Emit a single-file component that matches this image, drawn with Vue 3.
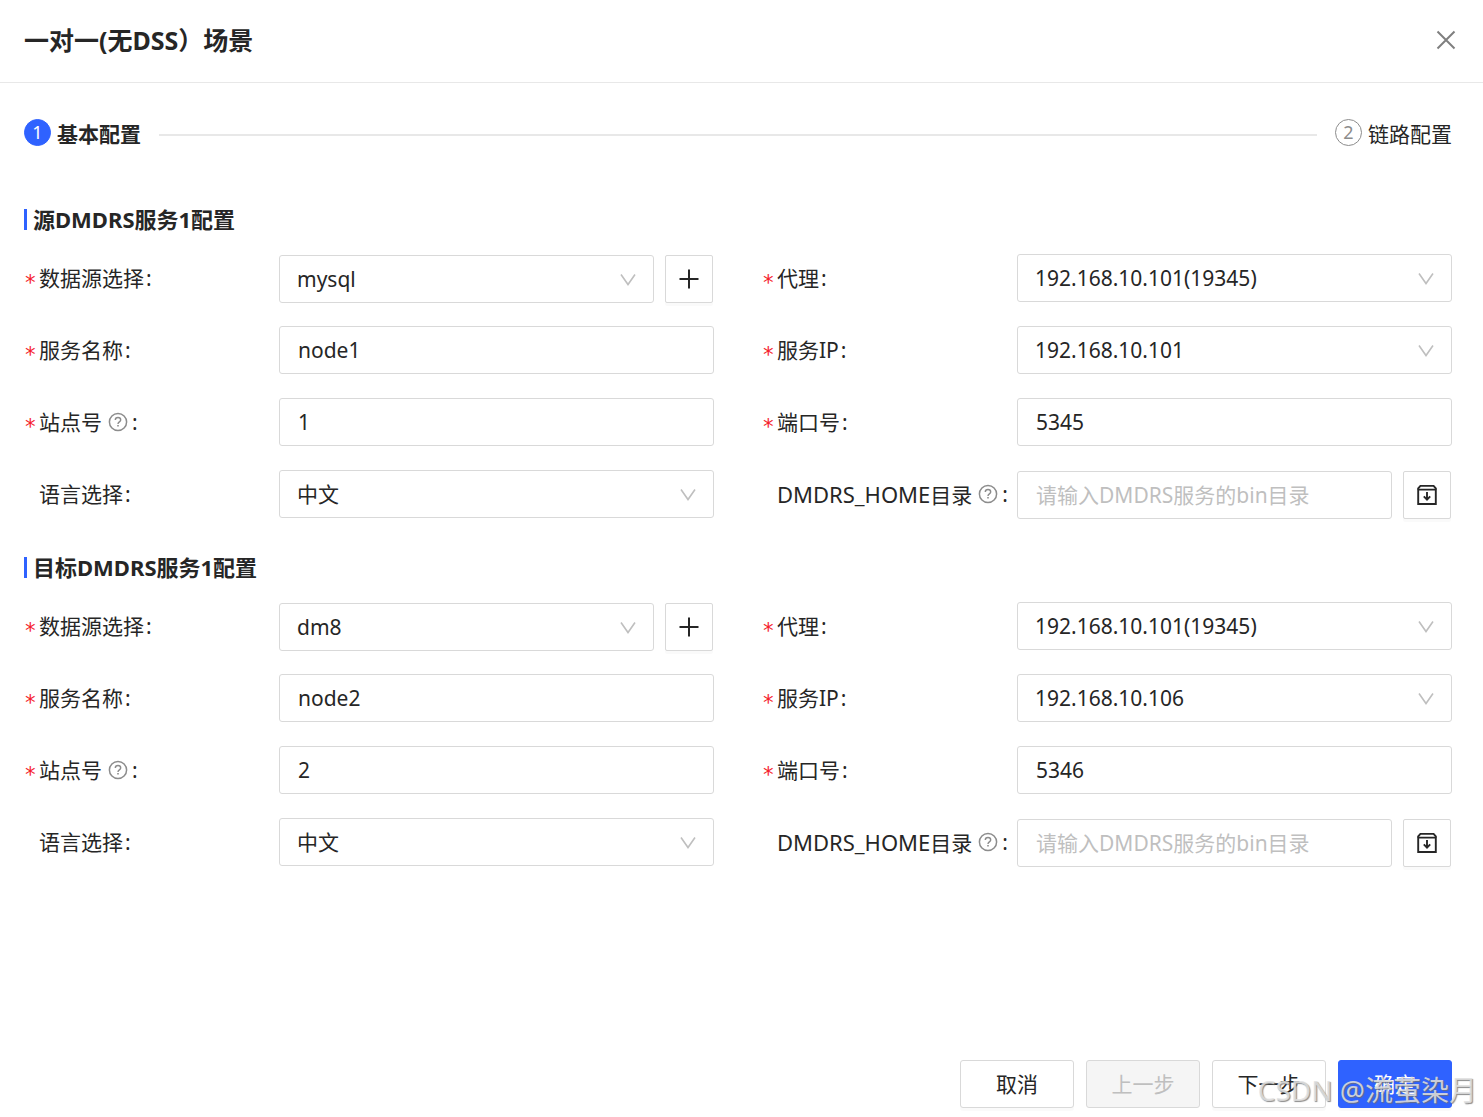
<script setup>
import { reactive } from 'vue'

const hosts = ['192.168.10.101', '192.168.10.106']

const sections = reactive([
  {
    id: 'source',
    title: '源DMDRS服务1配置',
    fields: [
      { key: 'ds', label: '数据源选择', required: true, type: 'select', value: 'mysql', options: ['mysql', 'dm8'], addon: 'plus' },
      { key: 'agent', label: '代理', required: true, type: 'select', value: '192.168.10.101(19345)', options: ['192.168.10.101(19345)'] },
      { key: 'name', label: '服务名称', required: true, type: 'input', value: 'node1' },
      { key: 'ip', label: '服务IP', required: true, type: 'select', value: '192.168.10.101', options: hosts },
      { key: 'site', label: '站点号', required: true, help: true, type: 'input', value: '1' },
      { key: 'port', label: '端口号', required: true, type: 'input', value: '5345' },
      { key: 'lang', label: '语言选择', type: 'select', value: '中文', options: ['中文'] },
      { key: 'home', code: 'DMDRS_HOME', label: '目录', help: true, type: 'input', value: '', placeholder: '请输入DMDRS服务的bin目录', addon: 'box' },
    ],
  },
  {
    id: 'target',
    title: '目标DMDRS服务1配置',
    fields: [
      { key: 'ds', label: '数据源选择', required: true, type: 'select', value: 'dm8', options: ['mysql', 'dm8'], addon: 'plus' },
      { key: 'agent', label: '代理', required: true, type: 'select', value: '192.168.10.101(19345)', options: ['192.168.10.101(19345)'] },
      { key: 'name', label: '服务名称', required: true, type: 'input', value: 'node2' },
      { key: 'ip', label: '服务IP', required: true, type: 'select', value: '192.168.10.106', options: hosts },
      { key: 'site', label: '站点号', required: true, help: true, type: 'input', value: '2' },
      { key: 'port', label: '端口号', required: true, type: 'input', value: '5346' },
      { key: 'lang', label: '语言选择', type: 'select', value: '中文', options: ['中文'] },
      { key: 'home', code: 'DMDRS_HOME', label: '目录', help: true, type: 'input', value: '', placeholder: '请输入DMDRS服务的bin目录', addon: 'box' },
    ],
  },
])
</script>

<template>
  <div class="dialog">
    <header class="header">
      <h1>一对一(无DSS）场景</h1>
      <button class="close" type="button" aria-label="关闭">
        <svg width="20" height="20" viewBox="0 0 20 20" fill="none" stroke="#7f7f7f" stroke-width="2">
          <path d="M1.5 1.5 18.5 18.5M18.5 1.5 1.5 18.5" />
        </svg>
      </button>
    </header>

    <main class="body">
      <div class="steps">
        <div class="step active"><span class="num">1</span><span>基本配置</span></div>
        <div class="line"></div>
        <div class="step"><span class="num">2</span><span>链路配置</span></div>
      </div>

      <section v-for="s in sections" :key="s.id" class="section">
        <h2>{{ s.title }}</h2>
        <div class="grid">
          <div v-for="f in s.fields" :key="f.key" class="field">
            <label :for="s.id + '-' + f.key">
              <span class="star">{{ f.required ? '*' : '' }}</span>
              <span><span v-if="f.code" class="code">{{ f.code }}</span>{{ f.label }}</span>
              <svg v-if="f.help" class="help" width="20" height="20" viewBox="0 0 20 20" fill="none" stroke="#8c8c8c">
                <circle cx="10" cy="10" r="8.6" stroke-width="1.5" />
                <path d="M7.3 8.1c0-1.6 1.2-2.6 2.7-2.6s2.7 1 2.7 2.5c0 1.9-2.7 1.9-2.7 3.9" stroke-width="1.4" />
                <path d="M10 13v1.6" stroke-width="1.6" />
              </svg>
              <span class="colon">:</span>
            </label>
            <div class="control" :class="{ grouped: f.addon }">
              <div v-if="f.type === 'select'" class="select">
                <select :id="s.id + '-' + f.key" v-model="f.value">
                  <option v-for="o in f.options" :key="o">{{ o }}</option>
                </select>
                <svg class="chevron" width="16" height="14" viewBox="0 0 16 14" fill="none" stroke="#bfbfbf" stroke-width="1.6">
                  <path d="M1 1.5 8 11.5 15 1.5" />
                </svg>
              </div>
              <input v-else :id="s.id + '-' + f.key" v-model="f.value" type="text" :placeholder="f.placeholder" />
              <button v-if="f.addon === 'plus'" class="addon" type="button" aria-label="新增数据源">
                <svg width="20" height="20" viewBox="0 0 20 20" fill="none" stroke="#262626" stroke-width="2">
                  <path d="M10 .5v19M.5 10h19" />
                </svg>
              </button>
              <button v-if="f.addon === 'box'" class="addon" type="button" aria-label="选择目录">
                <svg width="20" height="22" viewBox="0 0 20 22" fill="none" stroke="#262626">
                  <path d="M1.2 5.6h17.6v14.4H1.2z" stroke-width="1.9" />
                  <path d="M1.2 5.6V4.4L3.4 1.9h13.2l2.2 2.5v1.2" stroke-width="1.9" />
                  <path d="M10 8v7.4M6.8 12.4 10 15.6l3.2-3.2" stroke-width="1.9" />
                </svg>
              </button>
            </div>
          </div>
        </div>
      </section>
    </main>

    <footer class="footer">
      <button type="button" class="btn">取消</button>
      <button type="button" class="btn" disabled>上一步</button>
      <button type="button" class="btn">下一步</button>
      <button type="button" class="btn primary">确定</button>
      <span class="watermark">CSDN @流萤染月</span>
    </footer>
  </div>
</template>

<style>
body {
  margin: 0;
  background: #fff;
}
</style>

<style scoped>
.dialog,
.dialog * {
  box-sizing: border-box;
}
.dialog {
  display: flex;
  flex-direction: column;
  min-height: 100vh;
  color: #262626;
  font-family: 'Noto Sans', 'Noto Sans CJK SC', sans-serif;
  font-size: 21px;
  line-height: 32px;
}
button,
input,
select {
  font: inherit;
  color: inherit;
}
h1,
h2 {
  margin: 0;
  font-weight: 700;
}
.header {
  display: flex;
  align-items: center;
  justify-content: space-between;
  padding: 24px 23px 26px 24px;
  border-bottom: 1px solid #e8e8e8;
}
h1 {
  font-size: 25px;
}
.close {
  display: flex;
  padding: 4px;
  border: 0;
  background: none;
}
.body {
  flex: 1;
  padding: 36px 31px 0 24px;
}
.steps {
  display: flex;
  align-items: center;
  gap: 18px;
  margin-bottom: 58px;
}
.step {
  display: flex;
  gap: 6px;
  height: 32px;
  line-height: 30px;
}
.step.active {
  font-weight: 700;
}
.num {
  width: 27px;
  height: 27px;
  border: 1px solid #8c8c8c;
  border-radius: 50%;
  color: #8c8c8c;
  font-size: 18px;
  font-weight: 400;
  line-height: 25px;
  text-align: center;
}
.active .num {
  border-color: #2f62ff;
  background: #2f62ff;
  color: #fff;
}
.line {
  flex: 1;
  height: 2px;
  background: #e8e8e8;
}
.section {
  margin-bottom: 39px;
}
h2 {
  margin-bottom: 24px;
  padding-left: 6px;
  border-left: 3px solid #2f62ff;
  font-size: 22px;
  line-height: 21px;
}
.grid {
  display: grid;
  grid-template-columns: 1fr 1fr;
  grid-auto-rows: 48px;
  gap: 24px 48px;
}
.field {
  display: grid;
  grid-template-columns: 255px 1fr;
  align-items: start;
}
label {
  display: flex;
  align-items: center;
  height: 48px;
  white-space: nowrap;
}
.star {
  width: 15px;
  padding-top: 10px;
  color: #f5222d;
  font-family: 'DejaVu Sans Mono', monospace;
  font-size: 21px;
  line-height: 24px;
}
.code {
  font-size: 22px;
}
.help {
  margin: 0 2px 0 6px;
}
.colon {
  margin-left: 2px;
}
.control {
  display: flex;
  gap: 11px;
}
.grouped {
  padding: 1px 1px 0 0;
}
.select {
  position: relative;
  flex: 1;
}
.chevron {
  position: absolute;
  top: 18px;
  right: 18px;
  pointer-events: none;
}
select,
input {
  display: block;
  flex: 1;
  width: 100%;
  min-width: 0;
  height: 48px;
  padding: 0 17px;
  border: 1px solid #d9d9d9;
  border-radius: 3px;
  background: #fff;
  appearance: none;
}
input {
  padding: 0 18px;
}
input::placeholder {
  color: #bfbfbf;
  opacity: 1;
}
.addon {
  display: flex;
  align-items: center;
  justify-content: center;
  width: 48px;
  height: 48px;
  padding: 0;
  border: 1px solid #d9d9d9;
  border-radius: 2px;
  background: #fff;
  box-shadow: 0 3px 0 rgba(0, 0, 0, 0.02);
}
.footer {
  position: relative;
  display: flex;
  justify-content: flex-end;
  gap: 12px;
  padding: 9px 31px;
}
.btn {
  width: 114px;
  height: 48px;
  padding: 0;
  border: 1px solid #d9d9d9;
  border-radius: 3px;
  background: #fff;
  box-shadow: 0 3px 0 rgba(0, 0, 0, 0.02);
}
.btn:disabled {
  background: #f5f5f5;
  color: #bfbfbf;
  box-shadow: none;
}
.btn.primary {
  border-color: #2f62ff;
  background: #2f62ff;
  color: #fff;
}
.watermark {
  position: absolute;
  right: 6px;
  bottom: 7px;
  color: rgba(225, 225, 225, 0.85);
  font-size: 28px;
  line-height: 40px;
  text-shadow: 1px 1px 1px rgba(110, 110, 110, 0.8);
  pointer-events: none;
}
</style>
